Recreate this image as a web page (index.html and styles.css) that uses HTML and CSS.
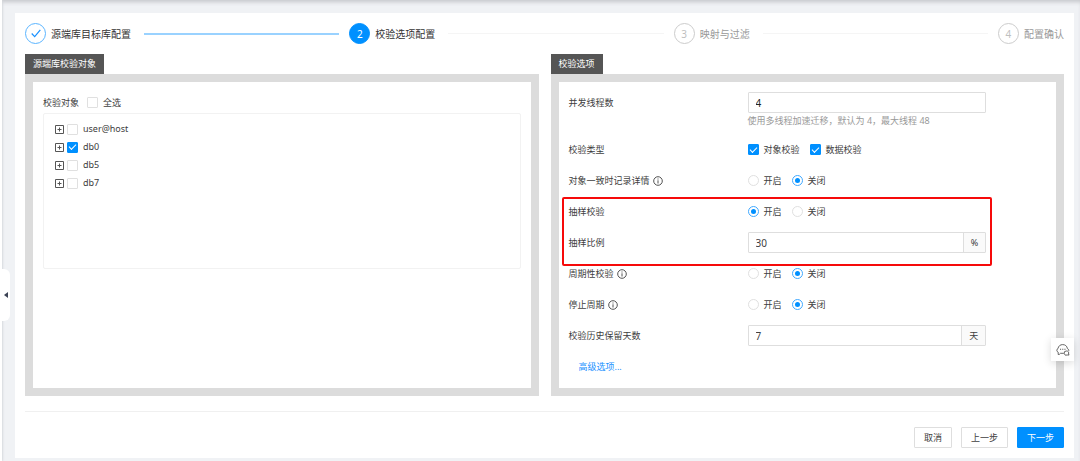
FILE: index.html
```html
<!DOCTYPE html>
<html lang="zh-CN">
<head>
<meta charset="utf-8">
<meta name="viewport" content="width=device-width, initial-scale=1">
<title>校验选项配置</title>
<link rel="stylesheet" href="styles.css">
</head>
<body>
<svg class="sprite" aria-hidden="true">
  <symbol id="plus-square" viewBox="0 0 9 9"><path d="M.5.5h8v8h-8zM2.5 4.5h4M4.5 2.5v4" fill="none" stroke="currentColor"/></symbol>
  <symbol id="info" viewBox="0 0 10 10"><circle cx="5" cy="5" r="4.3" fill="none" stroke="currentColor" stroke-width=".9"/><path d="M5 4.3v3.2M5 2.5v1" stroke="currentColor" stroke-width=".9"/></symbol>
</svg>
<div class="app">
  <aside class="sider">
    <button class="sider-toggle" type="button" aria-label="收起菜单">
      <svg width="4" height="6" viewBox="0 0 4 6"><path d="M4 0v6L0 3z" fill="#3c4354"/></svg>
    </button>
  </aside>
  <main class="main">
    <section class="card">
      <ol class="steps">
        <li class="step done">
          <span class="step-icon"><svg width="10" height="9" viewBox="0 0 10 9"><path d="M.7 4.5l3 3.2L9.3.8" fill="none" stroke="currentColor" stroke-width="1.2"/></svg></span>
          <span class="step-title">源端库目标库配置</span>
        </li>
        <li class="step current"><span class="step-icon">2</span><span class="step-title">校验选项配置</span></li>
        <li class="step"><span class="step-icon">3</span><span class="step-title">映射与过滤</span></li>
        <li class="step"><span class="step-icon">4</span><span class="step-title">配置确认</span></li>
      </ol>

      <div class="panels">
        <section class="panel">
          <h2 class="panel-tab">源端库校验对象</h2>
          <div class="panel-body">
            <div class="tree-head">
              <span>校验对象</span>
              <label class="choice"><input class="check" type="checkbox">全选</label>
            </div>
            <ul class="tree">
              <li class="node"><button class="expand" type="button" aria-label="展开 user@host"><svg width="9" height="9"><use href="#plus-square"/></svg></button><label class="node-label"><input class="check" type="checkbox">user@host</label></li>
              <li class="node"><button class="expand" type="button" aria-label="展开 db0"><svg width="9" height="9"><use href="#plus-square"/></svg></button><label class="node-label"><input class="check" type="checkbox" checked>db0</label></li>
              <li class="node"><button class="expand" type="button" aria-label="展开 db5"><svg width="9" height="9"><use href="#plus-square"/></svg></button><label class="node-label"><input class="check" type="checkbox">db5</label></li>
              <li class="node"><button class="expand" type="button" aria-label="展开 db7"><svg width="9" height="9"><use href="#plus-square"/></svg></button><label class="node-label"><input class="check" type="checkbox">db7</label></li>
            </ul>
          </div>
        </section>

        <section class="panel">
          <h2 class="panel-tab">校验选项</h2>
          <form class="panel-body">
            <div class="row">
              <label class="label" for="threads">并发线程数</label>
              <div>
                <div class="field"><input class="text strong" id="threads" type="text" value="4"></div>
                <p class="help">使用多线程加速迁移，默认为 4，最大线程 48</p>
              </div>
            </div>
            <div class="row">
              <span class="label">校验类型</span>
              <div class="choices">
                <label class="choice"><input class="check" type="checkbox" checked>对象校验</label>
                <label class="choice"><input class="check" type="checkbox" checked>数据校验</label>
              </div>
            </div>
            <div class="row">
              <span class="label">对象一致时记录详情<svg width="10" height="10"><use href="#info"/></svg></span>
              <div class="choices">
                <label class="choice"><input class="radio" type="radio" name="detail">开启</label>
                <label class="choice"><input class="radio" type="radio" name="detail" checked>关闭</label>
              </div>
            </div>
            <div class="marked">
              <div class="row">
                <span class="label">抽样校验</span>
                <div class="choices">
                  <label class="choice"><input class="radio" type="radio" name="sample" checked>开启</label>
                  <label class="choice"><input class="radio" type="radio" name="sample">关闭</label>
                </div>
              </div>
              <div class="row">
                <label class="label" for="ratio">抽样比例</label>
                <div class="field"><input class="text" id="ratio" type="text" value="30"><span class="addon">%</span></div>
              </div>
            </div>
            <div class="row">
              <span class="label">周期性校验<svg width="10" height="10"><use href="#info"/></svg></span>
              <div class="choices">
                <label class="choice"><input class="radio" type="radio" name="period">开启</label>
                <label class="choice"><input class="radio" type="radio" name="period" checked>关闭</label>
              </div>
            </div>
            <div class="row">
              <span class="label">停止周期<svg width="10" height="10"><use href="#info"/></svg></span>
              <div class="choices">
                <label class="choice"><input class="radio" type="radio" name="stop">开启</label>
                <label class="choice"><input class="radio" type="radio" name="stop" checked>关闭</label>
              </div>
            </div>
            <div class="row">
              <label class="label" for="days">校验历史保留天数</label>
              <div class="field"><input class="text" id="days" type="text" value="7"><span class="addon">天</span></div>
            </div>
            <a class="more" href="#">高级选项...</a>
          </form>
        </section>
      </div>

      <footer class="actions">
        <button class="btn" type="button">取消</button>
        <button class="btn" type="button">上一步</button>
        <button class="btn primary" type="button">下一步</button>
      </footer>
    </section>
  </main>
</div>
<button class="chat" type="button" aria-label="反馈">
  <svg width="14" height="12" viewBox="0 0 14 12" fill="none" stroke="#555" stroke-width=".9">
    <path d="M2.2 10.5V8.2C.4 7.6.4 5 2 4.600C2.400 2 4.200.6 6.700.6s4.300 1.400 4.700 4c1.300.4 1.500 1.600 1.300 2.600M2.200 10.500h1l1.300-1.200h3.300"/>
    <path d="M10.300 7a2.100 2.100 0 1 0 .9 4h1.900l-.6-1A2.100 2.100 0 0 0 10.300 7z"/>
    <path d="M4 5.200h1.100M6.200 5.200h1.100M8.400 5.200h1.100" stroke-width="1.100"/>
  </svg>
</button>
</body>
</html>
```
FILE: styles.css
```css
* { box-sizing: border-box; }

body {
  margin: 0;
  background: #f0f2f5;
  color: #404040;
  font: 9px/16px "Noto Sans", "Noto Sans CJK SC", sans-serif;
}

button, input { font: inherit; color: inherit; }
button { padding: 0; border: 0; background: none; cursor: pointer; }
h2, p, ol, ul { margin: 0; padding: 0; font-weight: 400; font-size: inherit; }
ol, ul { list-style: none; }

.sprite { position: absolute; width: 0; height: 0; }

.app {
  display: flex;
  min-height: 100vh;
  box-shadow: inset 0 4px 4px -2px #c4c6ca;
}

.sider {
  position: relative;
  flex: none;
  width: 2px;
  background: #fff;
  box-shadow: 1px 0 2px #d5d8dc;
}

.sider-toggle {
  position: absolute;
  top: 269px;
  left: 0;
  display: flex;
  align-items: center;
  justify-content: flex-end;
  width: 10px;
  height: 52px;
  padding-right: 2px;
  border-radius: 0 6px 6px 0;
  background: #fff;
}

.main { flex: 1; min-width: 0; padding: 13px 6px 3px 13px; }
.card { padding: 10px; background: #fff; }

.steps { display: flex; gap: 10px; }
.step { display: flex; flex: 1; align-items: center; gap: 5px; color: #999; }
.step:last-child { flex: none; }
.step:not(:last-child)::after {
  content: "";
  flex: 1;
  height: 1px;
  margin-left: 8px;
  background: #f5f5f5;
}
.step-icon {
  display: flex;
  align-items: center;
  justify-content: center;
  width: 21px;
  height: 21px;
  border: 1px solid #ccc;
  border-radius: 50%;
  color: #bfbfbf;
  font-size: 10px;
}
.step-title { font-size: 10px; white-space: nowrap; }
.done, .current { color: #333; }
.done .step-icon { border-color: #5bb5ff; color: #1890ff; }
.step.done::after { height: 2px; background: #9ad2ff; }
.current .step-icon { border-color: #0090ff; background: #0090ff; color: #fff; }

.panels {
  display: grid;
  grid-template-columns: 1fr 1fr;
  gap: 12px;
  padding: 10px 0 15px;
}
.panel { display: flex; flex-direction: column; align-items: flex-start; min-width: 0; }
.panel-tab { padding: 0 8px; background: #555; color: #fff; line-height: 20px; }
.panel-body { flex: 1; width: 100%; padding: 10px; border: 8px solid #dcdcdc; }

.tree-head { display: flex; align-items: center; gap: 8px; height: 21px; }
.choice { display: flex; align-items: center; gap: 5px; }
.tree {
  height: 156px;
  padding: 6px 11px;
  border: 1px solid #f2f2f2;
  border-radius: 2px;
}
.node { display: flex; align-items: center; gap: 3px; height: 18px; }
.expand { display: flex; color: #555; }
.node-label { display: flex; align-items: center; gap: 5px; }

.check, .radio {
  display: grid;
  place-content: center;
  width: 11px;
  height: 11px;
  margin: 0;
  border: 1px solid #e0e0e0;
  background: #fff;
  appearance: none;
}
.check { border-radius: 1px; }
.check:checked { border-color: #0090ff; background: #0090ff; }
.check:checked::after {
  content: "";
  width: 6px;
  height: 3px;
  margin-bottom: 2px;
  border: solid #fff;
  border-width: 0 0 1px 1px;
  transform: rotate(-45deg);
}
.radio { border-radius: 50%; }
.radio:checked { border-color: #40a9ff; }
.radio:checked::after {
  content: "";
  width: 5px;
  height: 5px;
  border-radius: 50%;
  background: #0090ff;
}

.row {
  display: grid;
  grid-template-columns: 3fr 4fr 1fr;
  align-items: start;
  padding-bottom: 10px;
}
.label { display: flex; align-items: center; gap: 3px; height: 21px; }
.choices { display: flex; align-items: center; gap: 10px; height: 21px; }
.field { display: flex; height: 21px; border: 1px solid #dedede; border-radius: 1px; }
.text { flex: 1; min-width: 0; padding: 0 7px; border: 0; background: none; font-size: 10px; outline: 0; }
.strong { color: #222; }
.addon {
  display: flex;
  align-items: center;
  padding: 0 7px;
  border-left: 1px solid #dedede;
  background: #fafafa;
}
.help { color: #999; }

.marked { position: relative; }
.marked::after {
  content: "";
  position: absolute;
  inset: -4px calc(12.5% - 6px) -3px -7px;
  border: 2px solid #f60a0a;
  border-radius: 2px;
  pointer-events: none;
}

.more {
  display: block;
  width: max-content;
  margin: 0 10px;
  color: #1890ff;
  line-height: 22px;
  text-decoration: none;
}

.actions {
  display: flex;
  justify-content: flex-end;
  gap: 9px;
  padding-top: 15px;
  border-top: 1px solid #f0f0f0;
}
.btn { height: 21px; padding: 0 9px; border: 1px solid #dedede; border-radius: 1px; background: #fff; }
.primary { border-color: #0090ff; background: #0090ff; color: #fff; }

.chat {
  position: fixed;
  top: 338px;
  right: 6px;
  display: flex;
  align-items: center;
  justify-content: center;
  width: 23px;
  height: 23px;
  background: #fff;
  box-shadow: 0 2px 8px rgba(0, 0, 0, .15);
}
```
